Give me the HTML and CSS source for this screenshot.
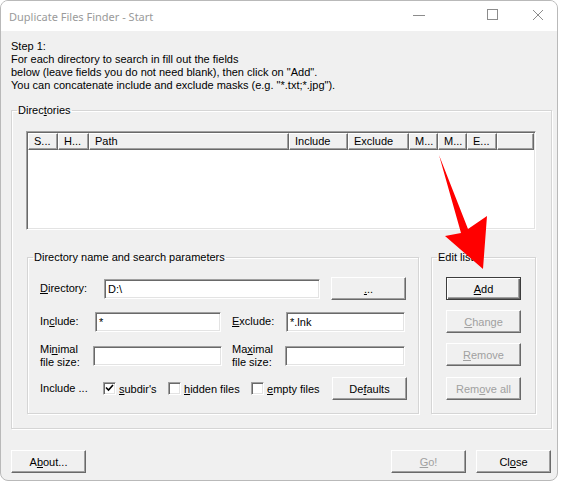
FILE: index.html
```html
<!DOCTYPE html>
<html>
<head>
<meta charset="utf-8">
<link rel="stylesheet" href="styles.css">
</head>
<body>
<div class="window">
  <div class="titlebar">
    <span class="title">Duplicate Files Finder - Start</span>
    <svg class="caption" width="160" height="30" viewBox="0 0 160 30">
      <line x1="16" y1="14.5" x2="28" y2="14.5" stroke="#8c8c8c" stroke-width="1"/>
      <rect x="90.5" y="8.5" width="10" height="10" fill="none" stroke="#8c8c8c" stroke-width="1"/>
      <path d="M136 9 L146 19 M146 9 L136 19" stroke="#8c8c8c" stroke-width="1"/>
    </svg>
  </div>
  <div class="content">
    <div class="intro">
      <div>Step 1:</div>
      <div>For each directory to search in fill out the fields</div>
      <div>below (leave fields you do not need blank), then click on "Add".</div>
      <div>You can concatenate include and exclude masks (e.g. "*.txt;*.jpg").</div>
    </div>
    <fieldset class="group dirs">
      <legend>Direc<u>t</u>ories</legend>
      <div class="dirs-body">
        <div class="listview">
          <div class="lv-head">
            <div class="col" style="width:30px">S...</div>
            <div class="col" style="width:31px">H...</div>
            <div class="col" style="width:200px">Path</div>
            <div class="col" style="width:59px">Include</div>
            <div class="col" style="width:61px">Exclude</div>
            <div class="col" style="width:29px">M...</div>
            <div class="col" style="width:29px">M...</div>
            <div class="col" style="width:30px">E...</div>
            <div class="col filler"></div>
          </div>
          <div class="lv-body"></div>
        </div>
        <div class="subgroups">
          <fieldset class="group params">
            <legend>Directory name and search parameters</legend>
            <div class="params-body">
              <div class="row r1">
                <label class="lbl w64"><u>D</u>irectory:</label>
                <div class="input w216">D:\</div>
                <button class="btn browse"><u>.</u>..</button>
              </div>
              <div class="row r2">
                <label class="lbl w55">In<u>c</u>lude:</label>
                <div class="input w126">*</div>
                <label class="lbl w54 ml11"><u>E</u>xclude:</label>
                <div class="input w119">*.lnk</div>
              </div>
              <div class="row r3">
                <label class="lbl w53 two">Mi<u>n</u>imal<br>file size:</label>
                <div class="input w129"></div>
                <label class="lbl w53 ml10 two">Ma<u>x</u>imal<br>file size:</label>
                <div class="input w120"></div>
              </div>
              <div class="row r4">
                <label class="lbl w63">Include ...</label>
                <div class="check w65"><span class="box"><svg width="9" height="9" viewBox="0 0 9 9"><path d="M1 3.5 L3.5 6 L8 1" fill="none" stroke="#000" stroke-width="1.6"/></svg></span><span><u>s</u>ubdir's</span></div>
                <div class="check w83"><span class="box"></span><span><u>h</u>idden files</span></div>
                <div class="check w81"><span class="box"></span><span><u>e</u>mpty files</span></div>
                <button class="btn">De<u>f</u>aults</button>
              </div>
            </div>
          </fieldset>
          <fieldset class="group editlist">
            <legend>Edit list</legend>
            <div class="edit-body">
              <button class="btn default"><u>A</u>dd</button>
              <button class="btn disabled"><u>C</u>hange</button>
              <button class="btn disabled"><u>R</u>emove</button>
              <button class="btn disabled gap11">Rem<u>o</u>ve all</button>
            </div>
          </fieldset>
        </div>
      </div>
    </fieldset>
    <div class="footer">
      <button class="btn">A<u>b</u>out...</button>
      <div class="spacer"></div>
      <button class="btn disabled"><u>G</u>o!</button>
      <button class="btn">Cl<u>o</u>se</button>
    </div>
  </div>
  <svg class="arrow" width="562" height="484" viewBox="0 0 562 484">
    <polygon points="439,155 468,229 487,216 483,269 445,236 461,233" fill="#ff0000"/>
  </svg>
</div>
</body>
</html>
```
FILE: styles.css
```css
* { box-sizing: border-box; }
html, body { margin: 0; padding: 0; background: #ffffff; }
body { width: 562px; height: 484px; overflow: hidden; }

.window {
  position: relative;
  width: 558px;
  height: 481px;
  border: 1px solid #b9b9b9;
  border-radius: 8px;
  overflow: hidden;
  background: #f0f0f0;
  font-family: "Liberation Sans", Arial, sans-serif;
  font-size: 11px;
  color: #000;
}

.titlebar {
  height: 30px;
  background: #ffffff;
  display: flex;
  align-items: center;
}
.title {
  font-family: "Noto Sans", "Open Sans", sans-serif;
  font-size: 11px;
  color: #9a9a9a;
  padding-left: 8px;
  flex: 1;
}
.caption { display: block; flex: none; }

.content {
  padding: 9px 6px 0 10px;
}
.intro {
  line-height: 13px;
}

.group {
  margin: 0;
  padding: 0;
  border: 1px solid #d5d5d5;
  box-shadow: inset 1px 1px 0 #ffffff, 1px 1px 0 #ffffff;
  min-width: 0;
}
.group > legend {
  padding: 0 1px;
  margin-left: 5px;
  line-height: 13px;
}

.dirs {
  margin-top: 12px;
  width: 541px;
}
.dirs-body {
  padding: 14px 15px 14px 14px;
}

.listview {
  width: 510px;
  height: 99px;
  background: #ffffff;
  border-top: 1px solid #a0a0a0;
  border-left: 1px solid #a0a0a0;
  border-right: 1px solid #ffffff;
  border-bottom: 1px solid #ffffff;
  box-shadow: inset 1px 1px 0 #696969, inset -1px -1px 0 #e3e3e3;
  padding: 1px;
  display: flex;
  flex-direction: column;
}
.lv-head {
  display: flex;
  height: 17px;
  flex: none;
}
.col {
  height: 17px;
  line-height: 15px;
  padding-left: 5px;
  background: #f0f0f0;
  border-top: 1px solid #ffffff;
  border-left: 1px solid #ffffff;
  border-right: 1px solid #696969;
  border-bottom: 1px solid #696969;
  box-shadow: inset -1px -1px 0 #a0a0a0;
  white-space: nowrap;
  overflow: hidden;
}
.col.filler { flex: 1; }
.lv-body { flex: 1; }

.subgroups {
  display: flex;
  margin-top: 21px;
  margin-left: 1px;
  gap: 12px;
}
.params { width: 392px; height: 163px; }
.editlist { width: 105px; height: 163px; }

.params-body { padding: 13px 0 0 12px; }
.edit-body {
  padding: 13px 0 0 14px;
  display: flex;
  flex-direction: column;
  gap: 10px;
}

.row {
  display: flex;
  align-items: center;
}
.r1 { height: 23px; }
.r2 { height: 23px; margin-top: 10px; }
.r3 { height: 27px; margin-top: 9px; }
.r4 { height: 23px; margin-top: 8px; }

.lbl { flex: none; line-height: 13px; }
.w53 { width: 53px; }
.w54 { width: 54px; }
.w55 { width: 55px; }
.w63 { width: 63px; }
.w64 { width: 64px; }
.w65 { width: 65px; }
.w81 { width: 81px; }
.w83 { width: 83px; }
.w119 { width: 119px; }
.w120 { width: 120px; }
.w126 { width: 126px; }
.w129 { width: 129px; }
.w216 { width: 216px; }
.ml10 { margin-left: 10px; }
.ml11 { margin-left: 11px; }

.input {
  flex: none;
  height: 20px;
  background: #ffffff;
  border-top: 1px solid #a0a0a0;
  border-left: 1px solid #a0a0a0;
  border-right: 1px solid #ffffff;
  border-bottom: 1px solid #ffffff;
  box-shadow: inset 1px 1px 0 #696969, inset -1px -1px 0 #e3e3e3;
  padding: 2px 3px;
  line-height: 14px;
  white-space: nowrap;
}

.check {
  flex: none;
  display: flex;
  align-items: center;
  gap: 3px;
}
.box {
  width: 13px;
  height: 13px;
  background: #ffffff;
  border-top: 1px solid #a0a0a0;
  border-left: 1px solid #a0a0a0;
  border-right: 1px solid #ffffff;
  border-bottom: 1px solid #ffffff;
  box-shadow: inset 1px 1px 0 #696969, inset -1px -1px 0 #e3e3e3;
  display: flex;
  align-items: center;
  justify-content: center;
}
.box svg { display: block; }

.btn {
  flex: none;
  width: 75px;
  height: 23px;
  margin: 0;
  padding: 0;
  font-family: inherit;
  font-size: 11px;
  color: #000;
  background: #f0f0f0;
  border-top: 1px solid #ffffff;
  border-left: 1px solid #ffffff;
  border-right: 1px solid #696969;
  border-bottom: 1px solid #696969;
  box-shadow: inset -1px -1px 0 #a0a0a0, inset 1px 1px 0 #f0f0f0;
  border-radius: 0;
}
.btn.browse { margin-left: 11px; }
.btn.gap11 { margin-top: 1px; }
.btn.default {
  border: 1px solid #3c3c3c;
  box-shadow: inset 1px 1px 0 #ffffff, inset -1px -1px 0 #696969, inset -2px -2px 0 #a0a0a0;
}
.btn.disabled { color: #a0a0a0; }

.footer {
  display: flex;
  margin-top: 21px;
  width: 540px;
  gap: 10px;
}
.spacer { flex: 1; }

.arrow {
  position: absolute;
  left: -1px;
  top: -1px;
  pointer-events: none;
}
```
